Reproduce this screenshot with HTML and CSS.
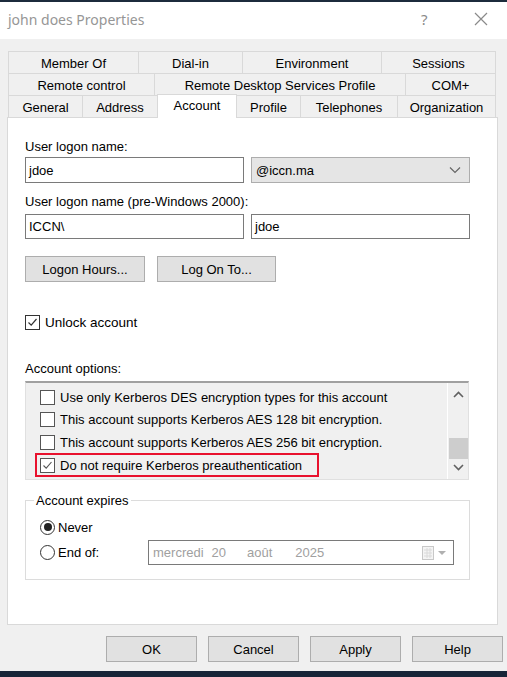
FILE: index.html
```html
<!DOCTYPE html>
<html>
<head>
<meta charset="utf-8">
<link rel="stylesheet" href="styles.css">
</head>
<body>
<div class="window">
  <div class="topstrip"></div>
  <div class="titlebar">
    <span class="title">john does Properties</span>
    <span class="tbtn help">?</span>
    <span class="tbtn close">
      <svg width="14" height="14" viewBox="0 0 14 14"><path d="M1 1L13 13M13 1L1 13" stroke="#8a8a8a" stroke-width="1.2" fill="none"/></svg>
    </span>
  </div>
  <div class="dialog">
    <div class="tabs">
      <div class="tabrow r1">
        <div class="tab">Member Of</div>
        <div class="tab">Dial-in</div>
        <div class="tab">Environment</div>
        <div class="tab">Sessions</div>
      </div>
      <div class="tabrow r2">
        <div class="tab">Remote control</div>
        <div class="tab">Remote Desktop Services Profile</div>
        <div class="tab">COM+</div>
      </div>
      <div class="tabrow r3">
        <div class="tab">General</div>
        <div class="tab">Address</div>
        <div class="tab active">Account</div>
        <div class="tab">Profile</div>
        <div class="tab">Telephones</div>
        <div class="tab">Organization</div>
      </div>
    </div>
    <div class="panel">
      <div class="label l1">User logon name:</div>
      <div class="fieldrow f1">
        <div class="input">jdoe</div>
        <div class="select">
          <span>@iccn.ma</span>
          <svg width="12" height="8" viewBox="0 0 12 8"><path d="M1 1.5L6 6.5L11 1.5" stroke="#666" stroke-width="1.2" fill="none"/></svg>
        </div>
      </div>
      <div class="label l2">User logon name (pre-Windows 2000):</div>
      <div class="fieldrow f2">
        <div class="input">ICCN\</div>
        <div class="input">jdoe</div>
      </div>
      <div class="btnrow">
        <div class="button b1">Logon Hours...</div>
        <div class="button b2">Log On To...</div>
      </div>
      <div class="check unlock">
        <span class="box">
          <svg width="13" height="13" viewBox="0 0 13 13"><path d="M2.5 6.5L5.2 9.2L10.5 3" stroke="#333" stroke-width="1.2" fill="none"/></svg>
        </span>
        <span>Unlock account</span>
      </div>
      <div class="label l3">Account options:</div>
      <div class="listbox">
        <div class="items">
          <div class="item"><span class="box"></span><span>Use only Kerberos DES encryption types for this account</span></div>
          <div class="item"><span class="box"></span><span>This account supports Kerberos AES 128 bit encryption.</span></div>
          <div class="item"><span class="box"></span><span>This account supports Kerberos AES 256 bit encryption.</span></div>
          <div class="item hl"><span class="box">
            <svg width="13" height="13" viewBox="0 0 13 13"><path d="M2.5 6.5L5.2 9.2L10.5 3" stroke="#555" stroke-width="1.1" fill="none"/></svg>
          </span><span>Do not require Kerberos preauthentication</span>
            <div class="redbox"></div>
          </div>
        </div>
        <div class="scrollbar">
          <svg class="arrow up" width="11" height="7" viewBox="0 0 11 7"><path d="M1 6L5.5 1.5L10 6" stroke="#606060" stroke-width="1.6" fill="none"/></svg>
          <div class="track"><div class="thumb"></div></div>
          <svg class="arrow down" width="11" height="7" viewBox="0 0 11 7"><path d="M1 1L5.5 5.5L10 1" stroke="#606060" stroke-width="1.6" fill="none"/></svg>
        </div>
      </div>
      <div class="group">
        <span class="legend">Account expires</span>
        <div class="radio r-never"><span class="circle on"><span class="dot"></span></span><span>Never</span></div>
        <div class="radio r-end">
          <span class="circle"></span><span class="endlbl">End of:</span>
          <div class="date">
            <span class="d1">mercredi</span><span class="d2">20</span><span class="d3">août</span><span class="d4">2025</span>
            <span class="cal">
              <svg width="30" height="16" viewBox="0 0 30 16">
                <rect x="1.5" y="1.5" width="11" height="13" fill="#f4f4f4" stroke="#c8c8c8"/>
                <path d="M3 5H11M3 8H11M3 11H11M6 3V13M9 3V13" stroke="#dadada" stroke-width="1"/>
                <path d="M17 6H25L21 10Z" fill="#b0b0b0"/>
              </svg>
            </span>
          </div>
        </div>
      </div>
    </div>
    <div class="footer">
      <div class="button fb">OK</div>
      <div class="button fb">Cancel</div>
      <div class="button fb">Apply</div>
      <div class="button fb">Help</div>
    </div>
  </div>
  <div class="bottomstrip"></div>
</div>
</body>
</html>
```
FILE: styles.css
```css
* { box-sizing: border-box; }
html, body { margin: 0; padding: 0; }
body {
  width: 507px;
  height: 677px;
  overflow: hidden;
  background: #f0f0f0;
  font-family: "Liberation Sans", Arial, sans-serif;
  font-size: 13px;
  color: #000;
}
.window { width: 507px; height: 677px; display: flex; flex-direction: column; }
.topstrip { height: 2px; background: #1c2b3c; }
.titlebar {
  height: 37px;
  background: #fff;
  display: flex;
  align-items: center;
  padding-left: 8px;
}
.title {
  font-family: "Noto Sans", "Open Sans", sans-serif;
  font-size: 14px;
  color: #969696;
  flex: 1;
  margin-top: -3px;
}
.tbtn { color: #8a8a8a; display: flex; align-items: center; }
.help {
  font-family: "Noto Sans", sans-serif;
  font-size: 15px;
  width: 20px;
  margin-right: 33px;
  margin-top: -3px;
}
.close { margin-right: 19px; margin-top: -3px; }

.dialog {
  flex: 1;
  background: #f0f0f0;
  display: flex;
  flex-direction: column;
  padding: 12px 0 0 7px;
}
.tabs { margin-left: 1px; width: 489px; }
.tabrow { display: grid; height: 22px; }
.r1 { grid-template-columns: 130px 104px 139px 115px; }
.r2 { grid-template-columns: 146px 251px 91px; }
.r3 { grid-template-columns: 74px 75px 80px 63px 97px 99px; height: 22px; }
.tab {
  border-left: 1px solid #d9d9d9;
  border-top: 1px solid #d9d9d9;
  display: flex;
  align-items: center;
  justify-content: center;
  background: #f0f0f0;
  white-space: nowrap;
  padding-top: 1px;
}
.tab:last-child { border-right: 1px solid #d9d9d9; }
.tab.active {
  background: #fff;
  height: 24px;
  margin-top: -1px;
  border-right: 1px solid #d9d9d9;
  position: relative;
  z-index: 2;
  align-items: flex-start;
  padding-top: 3px;
}
.tab.active + .tab { border-left: none; }

.panel {
  width: 491px;
  height: 508px;
  background: #fff;
  border: 1px solid #d9d9d9;
  padding: 0 0 0 17px;
  display: flex;
  flex-direction: column;
}
.label { line-height: 15px; }
.l1 { margin-top: 21px; }
.l2 { margin-top: 11px; }
.l3 { margin-top: 31px; }
.fieldrow { display: flex; gap: 7px; margin-top: 3px; }
.f1 { height: 26px; }
.f2 { height: 25px; margin-top: 5px; }
.input {
  width: 219px;
  height: 100%;
  border: 1px solid #7a7a7a;
  background: #fff;
  padding-left: 3px;
  display: flex;
  align-items: center;
}
.select {
  width: 219px;
  height: 100%;
  border: 1px solid #adadad;
  background: #e5e5e5;
  padding: 0 8px 0 4px;
  display: flex;
  align-items: center;
  justify-content: space-between;
}
.btnrow { display: flex; gap: 12px; margin-top: 17px; }
.button {
  height: 26px;
  background: #e1e1e1;
  border: 1px solid #adadad;
  display: flex;
  align-items: center;
  justify-content: center;
}
.b1 { width: 120px; }
.b2 { width: 119px; }
.check { display: flex; align-items: center; gap: 5px; }
.unlock { margin-top: 33px; font-size: 13.5px; }
.box {
  width: 15px;
  height: 15px;
  border: 1px solid #333;
  background: #fff;
  display: flex;
  align-items: center;
  justify-content: center;
  flex: none;
}
.box svg { display: block; }

.listbox {
  margin-top: 5px;
  width: 444px;
  height: 99px;
  background: #f0f0f0;
  border: 1px solid #e0e0e0;
  border-top: 2px solid #a0a0a0;
  display: flex;
}
.items { flex: 1; padding-top: 3px; padding-left: 14px; }
.item {
  display: flex;
  align-items: center;
  gap: 5px;
  height: 22.6px;
  position: relative;
  white-space: nowrap;
}
.item .box { border-color: #555; }
.redbox {
  position: absolute;
  left: -5px;
  top: -1px;
  width: 284px;
  height: 24px;
  border: 2px solid #e8112d;
}
.scrollbar {
  width: 21px;
  border-left: 1px solid #fff;
  display: flex;
  flex-direction: column;
  align-items: center;
}
.arrow { flex: none; }
.arrow.up { margin-top: 8px; }
.track { flex: 1; width: 100%; position: relative; }
.thumb {
  position: absolute;
  left: 1px;
  right: 0;
  top: 40px;
  height: 21px;
  background: #cdcdcd;
}
.arrow.down { margin-bottom: 8px; }

.group {
  margin-top: 20px;
  width: 445px;
  height: 80px;
  border: 1px solid #dcdcdc;
  padding: 16px 0 0 14px;
  position: relative;
}
.legend {
  position: absolute;
  top: -8px;
  left: 8px;
  padding: 0 2px;
  background: #fff;
  line-height: 15px;
}
.radio { display: flex; align-items: center; gap: 3px; }
.r-never { height: 20px; }
.r-end { margin-top: 3px; height: 25px; }
.circle {
  width: 15px;
  height: 15px;
  border: 1px solid #333;
  border-radius: 50%;
  display: flex;
  align-items: center;
  justify-content: center;
  flex: none;
  background: #fff;
}
.dot { width: 8px; height: 8px; border-radius: 50%; background: #222; }
.endlbl { width: 87px; }
.date {
  width: 306px;
  height: 25px;
  border: 1px solid #7a7a7a;
  background: #fff;
  color: #a0a0a0;
  display: flex;
  align-items: center;
  padding-left: 4px;
}
.d2 { margin-left: 8px; }
.d3 { margin-left: 21px; }
.d4 { margin-left: 23px; }
.cal { margin-left: auto; margin-right: 2px; display: flex; }

.footer {
  display: flex;
  gap: 11px;
  margin-top: 11px;
  padding-left: 99px;
}
.fb { width: 91px; height: 26px; }
.bottomstrip { height: 6px; background: #172538; }
```
